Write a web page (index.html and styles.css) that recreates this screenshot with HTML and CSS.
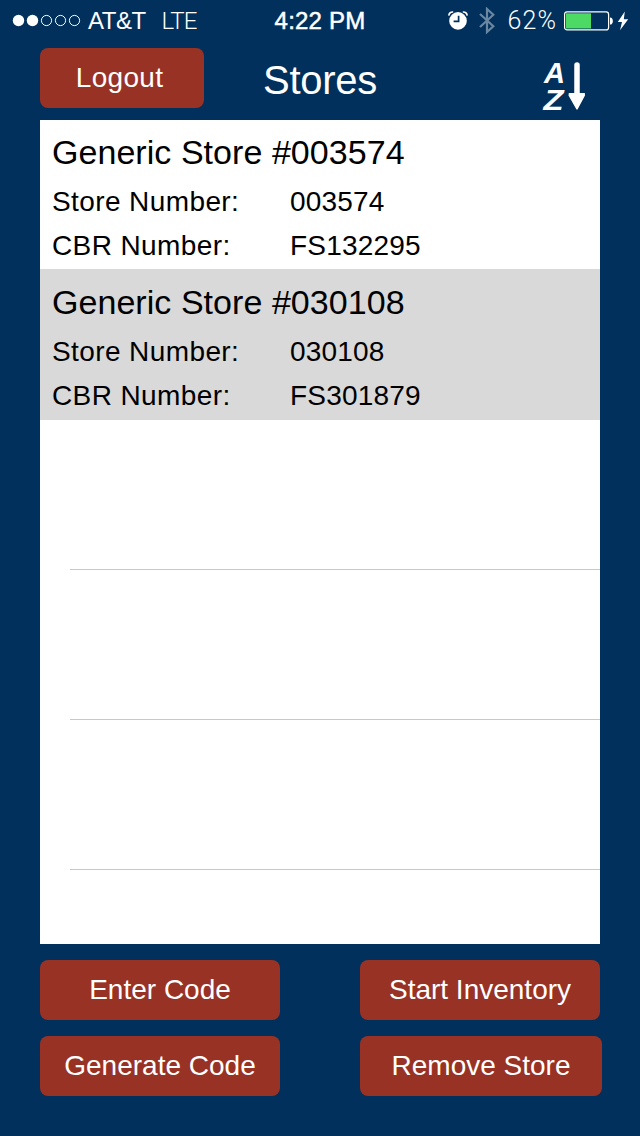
FILE: index.html
```html
<!DOCTYPE html>
<html>
	<head>
		<meta charset="UTF-8">
		<title>Stores</title>
		<link rel="stylesheet" href="styles.css">
	</head>
	<body>
		<div class="status">
			<div class="status-left">
				<svg class="signal" width="70" height="14" viewBox="0 0 70 14">
					<g fill="#fff">
						<circle cx="6.5" cy="6.5" r="5.7"/>
						<circle cx="20.5" cy="6.5" r="5.7"/>
					</g>
					<g fill="none" stroke="#fff" stroke-width="1">
						<circle cx="34.5" cy="6.5" r="5.1"/>
						<circle cx="48.5" cy="6.5" r="5.1"/>
						<circle cx="62.5" cy="6.5" r="5.1"/>
					</g>
				</svg>
				<span class="carrier">AT&amp;T</span>
				<span class="network">LTE</span>
			</div>
			<div class="clock">4:22 PM</div>
			<div class="status-right">
				<svg class="alarm" width="20" height="20" viewBox="0 0 20 20">
					<circle cx="10" cy="9.9" r="8.8" fill="#fff"/>
					<path d="M0.8 4.6C1 2 2.8 0.8 5.2 1M14.8 1C17.2 0.8 19 2 19.2 4.6" fill="none" stroke="#fff" stroke-width="1.6"/>
					<path d="M10.6 4.8V10.4H5.6" fill="none" stroke="#00305b" stroke-width="1.7"/>
				</svg>
				<svg class="bluetooth" width="16" height="28" viewBox="0 0 16 28">
					<path d="M1 7L14.3 19.3L8 25V2L14.3 7.8L1 20" fill="none" stroke="#6b86a0" stroke-width="2.2"/>
				</svg>
				<span class="percent">62%</span>
				<svg class="battery" width="66" height="20" viewBox="0 0 66 20">
					<rect x="0.6" y="0.9" width="44" height="18" rx="2.5" fill="none" stroke="#fff" stroke-width="1.2"/>
					<rect x="2" y="2.3" width="25" height="15.2" fill="#4cd964"/>
					<path d="M46 6.4C49.8 6.4 49.8 13.6 46 13.6Z" fill="#fff"/>
					<path d="M60.8 0.6L53.8 11H58L56 19.2L64.2 8.2H59.8Z" fill="#fff"/>
				</svg>
			</div>
		</div>

		<div class="header">
			<button class="btn logout">Logout</button>
			<h1 class="title">Stores</h1>
			<svg class="sort" width="44" height="50" viewBox="0 0 44 50">
				<g class="sort-text" fill="#fff">
					<text x="1" y="21.5" textLength="21" lengthAdjust="spacingAndGlyphs">A</text>
					<text x="0.5" y="48.5" textLength="20" lengthAdjust="spacingAndGlyphs">Z</text>
				</g>
				<path d="M34 4V34" stroke="#fff" stroke-width="5.5" stroke-linecap="round"/>
				<path d="M25.8 32H41.8L42 34.5L34.8 48Q34 49.5 33.2 48L25.5 34.5Z" fill="#fff"/>
			</svg>
		</div>

		<ul class="list">
			<li class="store">
				<h2>Generic Store #003574</h2>
				<dl>
					<dt>Store Number:</dt><dd>003574</dd>
					<dt>CBR Number:</dt><dd>FS132295</dd>
				</dl>
			</li>
			<li class="store active">
				<h2>Generic Store #030108</h2>
				<dl>
					<dt>Store Number:</dt><dd>030108</dd>
					<dt>CBR Number:</dt><dd>FS301879</dd>
				</dl>
			</li>
			<li class="empty"></li>
			<li class="empty"></li>
			<li class="empty"></li>
		</ul>

		<div class="actions">
			<button class="btn">Enter Code</button>
			<button class="btn">Start Inventory</button>
			<button class="btn">Generate Code</button>
			<button class="btn remove">Remove Store</button>
		</div>
	</body>
</html>
```
FILE: styles.css
```css
*{
	padding: 0;
	margin: 0;
	box-sizing: border-box;
}
body{
	width: 640px;
	height: 1136px;
	overflow: hidden;
	background: #00305b;
	font-family: "Liberation Sans", Arial, sans-serif;
	color: #fff;
}
ul,li{
	list-style: none;
}
svg{
	display: block;
	flex: none;
}
/* status bar */
.status{
	display: grid;
	grid-template-columns: 1fr 96px 1fr;
	height: 40px;
	padding: 0 10px 0 12px;
	line-height: 42px;
	font-size: 24px;
	white-space: nowrap;
}
.status-left,
.status-right{
	display: flex;
	align-items: center;
}
.status-right{
	justify-content: flex-end;
}
.carrier{
	margin-left: 6px;
	letter-spacing: -0.5px;
}
.network{
	margin-left: 16px;
	font-family: Roboto, sans-serif;
	font-weight: 300;
	letter-spacing: -0.8px;
}
.clock{
	margin-left: -2px;
	text-align: center;
	letter-spacing: 0.2px;
	-webkit-text-stroke: 0.5px #fff;
}
.bluetooth{
	margin-left: 11px;
}
.percent{
	margin-left: 12px;
	font-family: Roboto, sans-serif;
	font-weight: 300;
	font-size: 25px;
	letter-spacing: 1.1px;
}
.battery{
	margin-left: 7px;
}
/* title bar */
.header{
	display: grid;
	grid-template-columns: 164px 1fr 164px;
	height: 80px;
	padding: 8px 40px 0;
}
.title{
	font-size: 40px;
	font-weight: normal;
	line-height: 65px;
	letter-spacing: -0.3px;
	text-align: center;
}
.sort{
	justify-self: end;
	margin: 13px 13px 0 0;
	overflow: visible;
}
.sort-text{
	font-size: 30px;
	font-weight: bold;
	font-style: italic;
}
.btn{
	height: 60px;
	border: none;
	border-radius: 8px;
	background: #983224;
	color: #fff;
	font-family: inherit;
	font-size: 28px;
	line-height: 60px;
	text-align: center;
}
.logout{
	padding-right: 5px;
	letter-spacing: 0.3px;
}
/* store list */
.list{
	width: 560px;
	height: 824px;
	margin: 0 auto;
	overflow: hidden;
	background: #fff;
	color: #000;
}
.store{
	height: 149px;
	padding: 12px 12px 0;
}
.store.active{
	height: 151px;
	padding-top: 13px;
	background: #d9d9d9;
}
.store h2{
	margin-bottom: 8px;
	font-size: 34px;
	font-weight: normal;
	line-height: 40px;
	letter-spacing: 0.05px;
}
.store dl{
	display: grid;
	grid-template-columns: 238px 1fr;
	font-size: 28px;
	line-height: 44px;
}
.store dt{
	letter-spacing: 0.4px;
}
.store dd{
	letter-spacing: 0.2px;
}
.empty{
	height: 150px;
	margin-left: 30px;
	border-bottom: 1px solid #c8c7cc;
}
/* bottom buttons */
.actions{
	display: grid;
	grid-template-columns: 240px 240px;
	gap: 16px 80px;
	padding: 16px 40px 0;
}
.remove{
	width: 242px;
}
```
